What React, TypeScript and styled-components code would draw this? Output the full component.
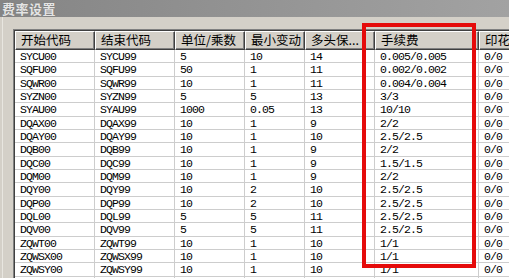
import styled, { createGlobalStyle } from "styled-components";

const GlobalStyle = createGlobalStyle`
  html, body {
    margin: 0;
    padding: 0;
    background: #d4d0c8;
  }
`;

const Window = styled.div`
  position: relative;
  width: 509px;
  height: 278px;
  overflow: hidden;
  background: #d4d0c8;
  display: flex;
  flex-direction: column;
`;

const TitleBar = styled.div`
  height: 17px;
  flex: none;
  display: flex;
  align-items: center;
  padding-left: 2px;
  background: linear-gradient(to right, #858585, #a2a2a2);
  color: #e4e4e4;
  font: bold 13px "Noto Sans CJK SC", sans-serif;
  letter-spacing: 0.5px;
  text-shadow: 0 0 1px #6a6a6a;
`;

const Body = styled.div`
  flex: 1;
  padding: 12px 0 0 10px;
  display: flex;
  border-left: 1px solid #e8e6e0;
  margin-left: 2px;
`;

const Grid = styled.div`
  flex: none;
  display: grid;
  grid-template-columns: 80px 80px 70px 60px 70px 104px 80px;
  grid-template-rows: 19px;
  grid-auto-rows: 13.33px;
  align-content: start;
  border-top: 1px solid #808080;
  border-left: 1px solid #808080;
  box-shadow: inset 1px 1px 0 #404040;
  padding: 1px 0 0 1px;
  background: #ffffff;
  width: 600px;
`;

const HeadCell = styled.div`
  box-sizing: border-box;
  background: #d4d0c8;
  border-top: 1px solid #ffffff;
  border-left: 1px solid #ffffff;
  border-right: 1px solid #404040;
  border-bottom: 1px solid #404040;
  box-shadow: inset -1px -1px 0 #808080;
  padding: 0 4px 0 5px;
  font: 12.5px "Noto Sans CJK SC", sans-serif;
  line-height: 16px;
  color: #000;
  white-space: nowrap;
  overflow: hidden;
`;

const Cell = styled.div`
  box-sizing: border-box;
  border-right: 1px solid #cdcdcd;
  border-bottom: 1px solid #cdcdcd;
  padding: 1px 0 0 5px;
  font: 11.5px "Liberation Mono", monospace;
  letter-spacing: -0.9px;
  line-height: 12px;
  color: #000;
  white-space: nowrap;
  overflow: hidden;
`;

const Highlight = styled.div`
  position: absolute;
  left: 362px;
  top: 23px;
  width: 114px;
  height: 245px;
  box-sizing: border-box;
  border: 4px solid #e50b0b;
  pointer-events: none;
`;

const headers = ["开始代码", "结束代码", "单位/乘数", "最小变动", "多头保...", "手续费", "印花税"];

const rows: string[][] = [
  ["SYCU00", "SYCU99", "5", "10", "14", "0.005/0.005"],
  ["SQFU00", "SQFU99", "50", "1", "11", "0.002/0.002"],
  ["SQWR00", "SQWR99", "10", "1", "11", "0.004/0.004"],
  ["SYZN00", "SYZN99", "5", "5", "13", "3/3"],
  ["SYAU00", "SYAU99", "1000", "0.05", "13", "10/10"],
  ["DQAX00", "DQAX99", "10", "1", "9", "2/2"],
  ["DQAY00", "DQAY99", "10", "1", "10", "2.5/2.5"],
  ["DQB00", "DQB99", "10", "1", "9", "2/2"],
  ["DQC00", "DQC99", "10", "1", "9", "1.5/1.5"],
  ["DQM00", "DQM99", "10", "1", "9", "2/2"],
  ["DQY00", "DQY99", "10", "2", "10", "2.5/2.5"],
  ["DQP00", "DQP99", "10", "2", "10", "2.5/2.5"],
  ["DQL00", "DQL99", "5", "5", "11", "2.5/2.5"],
  ["DQV00", "DQV99", "5", "5", "11", "2.5/2.5"],
  ["ZQWT00", "ZQWT99", "10", "1", "10", "1/1"],
  ["ZQWSX00", "ZQWSX99", "10", "1", "10", "1/1"],
  ["ZQWSY00", "ZQWSY99", "10", "1", "10", "1/1"],
  ["ZQSRY00", "ZQSRY99", "10", "1", "11", "3/3"],
];

export default function App() {
  return (
    <>
      <GlobalStyle />
      <Window>
        <TitleBar>费率设置</TitleBar>
        <Body>
          <Grid>
            {headers.map((h) => (
              <HeadCell key={h}>{h}</HeadCell>
            ))}
            {rows.map((r) =>
              [...r, "0/0"].map((v, i) => <Cell key={r[0] + i}>{v}</Cell>)
            )}
          </Grid>
        </Body>
        <Highlight />
      </Window>
    </>
  );
}
